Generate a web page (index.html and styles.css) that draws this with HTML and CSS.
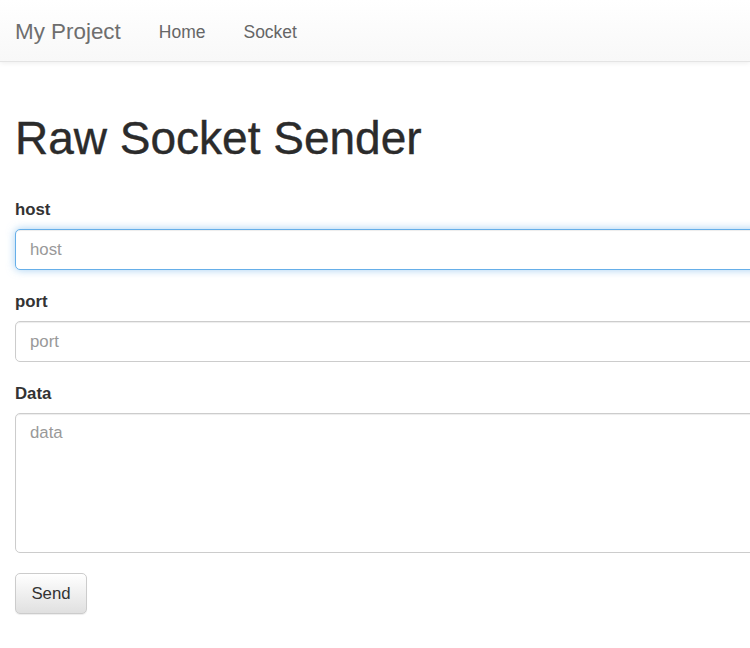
FILE: index.html
```html
<!DOCTYPE html>
<html>
<head>
<meta charset="utf-8">
<title>Raw Socket Sender</title>
<link rel="stylesheet" href="styles.css">
</head>
<body>
<nav class="navbar">
  <a class="brand" href="#">My Project</a>
  <a class="nav-link" href="#">Home</a>
  <a class="nav-link" href="#">Socket</a>
</nav>
<main class="container">
  <h1 class="title">Raw Socket Sender</h1>
  <form class="form">
    <div class="group">
      <label class="label" for="host">host</label>
      <input class="control focused" id="host" type="text" placeholder="host">
    </div>
    <div class="group">
      <label class="label" for="port">port</label>
      <input class="control" id="port" type="text" placeholder="port">
    </div>
    <div class="group">
      <label class="label" for="data">Data</label>
      <textarea class="control area" id="data" placeholder="data"></textarea>
    </div>
    <button class="btn" type="button">Send</button>
  </form>
</main>
</body>
</html>
```

FILE: styles.css
```css
html, body {
  margin: 0;
  padding: 0;
  overflow: hidden;
  background: #fff;
}
body {
  font-family: "Liberation Sans", Arial, Helvetica, sans-serif;
  color: #333;
  font-size: 16.8px;
  line-height: 24px;
  width: 750px;
  height: 648px;
}
.navbar {
  display: flex;
  align-items: center;
  height: 61px;
  border-bottom: 1px solid #e4e4e4;
  background: linear-gradient(to bottom, #ffffff 0%, #f8f8f8 100%);
  box-shadow: 0 1px 5px rgba(0,0,0,0.075);
  padding-left: 15px;
  padding-top: 2px;
  box-sizing: border-box;
  height: 62px;
}
.brand {
  font-size: 22.4px;
  color: #6e6e6e;
  text-decoration: none;
  margin-right: 38px;
}
.nav-link {
  font-size: 17.5px;
  color: #666;
  text-decoration: none;
  margin-right: 38px;
}
.container {
  padding-left: 15px;
  width: 735px;
  overflow: hidden;
}
.title {
  font-size: 46px;
  font-weight: normal;
  line-height: 48px;
  margin: 52px 0 36px 0;
  color: #2b2b2b;
  -webkit-text-stroke: 0.4px #2b2b2b;
}
.group {
  margin-bottom: 20px;
}
.label {
  display: block;
  font-weight: bold;
  line-height: 24px;
  margin-bottom: 7px;
  color: #333;
}
.control {
  display: block;
  box-sizing: border-box;
  width: 780px;
  height: 41px;
  padding: 7px 14px;
  font-family: "Liberation Sans", Arial, Helvetica, sans-serif;
  font-size: 16.8px;
  line-height: 24px;
  color: #555;
  border: 1px solid #ccc;
  border-radius: 5px;
  box-shadow: inset 0 1px 1px rgba(0,0,0,0.075);
  background: #fff;
  margin: 0;
  outline: none;
}
.control::placeholder {
  color: #999;
}
.focused {
  border-color: #66afe9;
  box-shadow: inset 0 1px 1px rgba(0,0,0,0.075), 0 0 8px rgba(102,175,233,0.6);
}
.area {
  height: 140px;
  resize: none;
}
.btn {
  display: block;
  box-sizing: border-box;
  width: 72px;
  height: 41px;
  padding: 0;
  margin-bottom: 10px;
  font-family: "Liberation Sans", Arial, Helvetica, sans-serif;
  font-size: 16.8px;
  color: #333;
  border: 1px solid #ccc;
  border-radius: 5px;
  background: linear-gradient(to bottom, #ffffff 0%, #e0e0e0 100%);
  box-shadow: inset 0 1px 0 rgba(255,255,255,0.15), 0 1px 1px rgba(0,0,0,0.075);
}
```
